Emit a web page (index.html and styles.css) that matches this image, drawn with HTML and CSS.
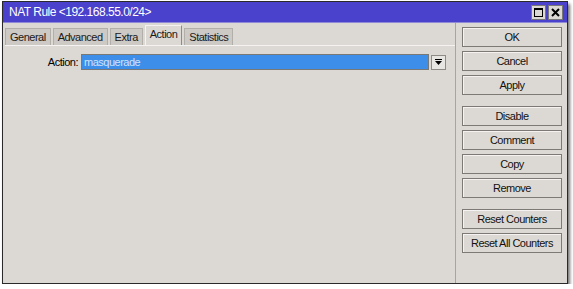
FILE: index.html
```html
<!DOCTYPE html>
<html lang="en">
<head>
  <meta charset="UTF-8">
  <title>NAT Rule</title>
  <link rel="stylesheet" href="styles.css">
</head>
<body>

<div class="ventana">
  <div class="titulo">
    <span>NAT Rule &lt;192.168.55.0/24&gt;</span>
    <div class="controles">
      <span class="ctrl"><svg width="9" height="9" viewBox="0 0 9 9"><rect x="0.5" y="0.5" width="8" height="8" fill="none" stroke="#000"/><rect x="0" y="0" width="9" height="2" fill="#000"/></svg></span>
      <span class="ctrl"><svg width="9" height="9" viewBox="0 0 9 9"><path d="M1 1L8 8M8 1L1 8" stroke="#000" stroke-width="2"/></svg></span>
    </div>
  </div>

  <div class="cuerpo">
    <div class="principal">
      <div class="pestanas">
        <div class="pestana">General</div>
        <div class="pestana">Advanced</div>
        <div class="pestana">Extra</div>
        <div class="pestana activa">Action</div>
        <div class="pestana">Statistics</div>
      </div>
      <div class="panel">
        <div class="fila">
          <label class="etiqueta">Action:</label>
          <div class="campo">masquerade</div>
          <div class="flecha"><svg width="7" height="7" viewBox="0 0 7 7"><rect x="0" y="0" width="7" height="1" fill="#000"/><path d="M0 2H7L3.5 6Z" fill="#000"/></svg></div>
        </div>
      </div>
    </div>

    <div class="botones">
      <button class="boton">OK</button>
      <button class="boton">Cancel</button>
      <button class="boton">Apply</button>
      <div class="separador"></div>
      <button class="boton">Disable</button>
      <button class="boton">Comment</button>
      <button class="boton">Copy</button>
      <button class="boton">Remove</button>
      <div class="separador"></div>
      <button class="boton">Reset Counters</button>
      <button class="boton">Reset All Counters</button>
    </div>
  </div>
</div>

</body>
</html>
```

FILE: styles.css
```css
body {
  margin: 0;
  background-color: #ffffff;
  font-family: 'Liberation Sans', Arial, sans-serif;
  font-size: 11px;
  letter-spacing: -0.5px;
  color: #000;
}

.ventana {
  margin: 1px 5px 0 2px;
  height: 281px;
  border: 1px solid #2a2a2a;
  background-color: #dcd9d5;
  box-shadow: 2px 3px 3px rgba(0, 0, 0, 0.55);
  display: flex;
  flex-direction: column;
}

.titulo {
  height: 20px;
  background-color: #4a41cc;
  color: white;
  font-size: 12px;
  display: flex;
  align-items: center;
  justify-content: space-between;
  padding: 0 4px 0 6px;
  border-bottom: 1px solid #8f8ad8;
}

.controles {
  display: flex;
  gap: 2px;
}

.ctrl {
  width: 13px;
  height: 13px;
  background-color: #dcd9d5;
  border: 1px solid #777;
  display: flex;
  align-items: center;
  justify-content: center;
}

.cuerpo {
  flex: 1;
  display: flex;
}

.principal {
  width: 450px;
  padding: 3px 0 0 2px;
  display: flex;
  flex-direction: column;
  border-right: 1px solid #a8a5a1;
}

.pestanas {
  display: flex;
  align-items: flex-end;
  height: 19px;
}

.pestana {
  height: 16px;
  line-height: 16px;
  padding: 0 4px;
  margin-right: 2px;
  background-color: #cdc9c4;
  border: 1px solid #b2aea9;
  border-bottom: none;
  color: #1a1a1a;
}

.pestana.activa {
  height: 19px;
  line-height: 17px;
  background-color: #dcd9d5;
  border-color: #f4f3f1;
  border-right-color: #8e8b87;
}

.panel {
  flex: 1;
  border-top: 1px solid #f4f3f1;
  padding-top: 8px;
}

.fila {
  display: flex;
  align-items: center;
}

.etiqueta {
  width: 73px;
  text-align: right;
  padding-right: 3px;
}

.campo {
  width: 344px;
  height: 14px;
  line-height: 14px;
  padding-left: 2px;
  background-color: #3d8ee8;
  color: #cfe3ff;
  border: 1px solid #7a7874;
}

.flecha {
  width: 13px;
  height: 13px;
  margin-left: 2px;
  border: 1px solid #8e8b87;
  background-color: #e8e6e3;
  display: flex;
  align-items: center;
  justify-content: center;
}

.botones {
  flex: 1;
  padding: 4px 0 0 6px;
  display: flex;
  flex-direction: column;
  gap: 4px;
}

.boton {
  width: 100px;
  height: 20px;
  font-family: 'Liberation Sans', Arial, sans-serif;
  font-size: 11px;
  letter-spacing: -0.5px;
  background-color: #dcd9d5;
  border: 1px solid #7d7a76;
  box-shadow: inset 1px 1px 0 #f4f3f1;
  padding: 0;
  color: #111;
}

.separador {
  height: 3px;
}
```
